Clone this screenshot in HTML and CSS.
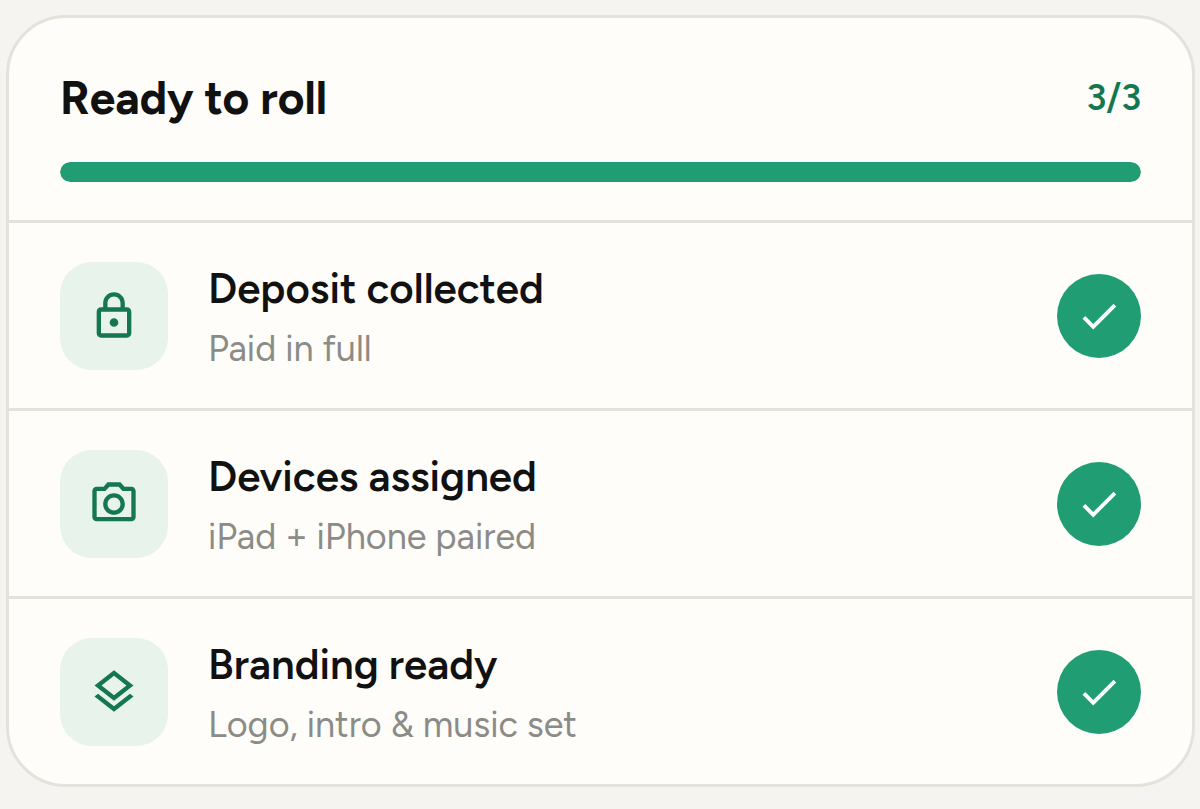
FILE: index.html
```html
<!DOCTYPE html>
<html lang="en">

<head>
  <meta charset="UTF-8" />
  <meta name="viewport" content="width=device-width, initial-scale=1.0" />
  <title>Ready to roll</title>
  <link rel="stylesheet" href="styles.css">
</head>

<body>

  <main class="card">
    <!-- Header with progress -->
    <header class="card-header">
      <div class="card-heading">
        <h1 id="card-title">Ready to roll</h1>
        <span class="count">3/3</span>
      </div>
      <div class="progress" role="progressbar" aria-labelledby="card-title" aria-valuemin="0" aria-valuemax="3" aria-valuenow="3">
        <div class="progress-fill" style="width: 100%"></div>
      </div>
    </header>

    <!-- Checklist -->
    <ul class="checklist">
      <li class="item">
        <div class="item-icon">
          <svg viewBox="0 0 24 24" aria-hidden="true">
            <path d="M18 8h-1V6c0-2.76-2.24-5-5-5S7 3.24 7 6v2H6c-1.1 0-2 .9-2 2v10c0 1.1.9 2 2 2h12c1.1 0 2-.9 2-2V10c0-1.1-.9-2-2-2zM9 6c0-1.66 1.34-3 3-3s3 1.34 3 3v2H9V6zm9 14H6V10h12v10zm-6-3c1.1 0 2-.9 2-2s-.9-2-2-2-2 .9-2 2 .9 2 2 2z" />
          </svg>
        </div>
        <div class="item-text">
          <h2>Deposit collected</h2>
          <p>Paid in full</p>
        </div>
        <div class="check">
          <svg viewBox="0 0 24 24" role="img" aria-label="Done">
            <path d="M9 16.17L4.83 12l-1.42 1.41L9 19 21 7l-1.41-1.41z" />
          </svg>
        </div>
      </li>

      <li class="item">
        <div class="item-icon">
          <svg viewBox="0 0 24 24" aria-hidden="true">
            <path d="M14.12 4l1.83 2H20v12H4V6h4.05l1.83-2h4.24M15 2H9L7.17 4H4c-1.1 0-2 .9-2 2v12c0 1.1.9 2 2 2h16c1.1 0 2-.9 2-2V6c0-1.1-.9-2-2-2h-3.17L15 2zm-3 7c1.65 0 3 1.35 3 3s-1.35 3-3 3-3-1.35-3-3 1.35-3 3-3m0-2c-2.76 0-5 2.24-5 5s2.24 5 5 5 5-2.24 5-5-2.24-5-5-5z" />
          </svg>
        </div>
        <div class="item-text">
          <h2>Devices assigned</h2>
          <p>iPad + iPhone paired</p>
        </div>
        <div class="check">
          <svg viewBox="0 0 24 24" role="img" aria-label="Done">
            <path d="M9 16.17L4.83 12l-1.42 1.41L9 19 21 7l-1.41-1.41z" />
          </svg>
        </div>
      </li>

      <li class="item">
        <div class="item-icon">
          <svg viewBox="0 0 24 24" aria-hidden="true">
            <path d="M11.99 18.54l-7.37-5.73L3 14.07l9 7 9-7-1.63-1.27-7.38 5.74zM12 16l7.36-5.73L21 9l-9-7-9 7 1.63 1.27L12 16zm0-11.47L17.74 9 12 13.47 6.26 9 12 4.53z" />
          </svg>
        </div>
        <div class="item-text">
          <h2>Branding ready</h2>
          <p>Logo, intro &amp; music set</p>
        </div>
        <div class="check">
          <svg viewBox="0 0 24 24" role="img" aria-label="Done">
            <path d="M9 16.17L4.83 12l-1.42 1.41L9 19 21 7l-1.41-1.41z" />
          </svg>
        </div>
      </li>
    </ul>
  </main>

</body>

</html>
```

FILE: styles.css
```css
/* Base Reset & Body */
* {
  margin: 0;
  padding: 0;
  box-sizing: border-box;
}

body {
  padding: 15px 5px 20px 6px;
  font-family: 'Figtree', 'Lato', sans-serif;
  background-color: #f5f4f0;
  color: #111111;
}

/* Card */
.card {
  background: #fefdf9;
  border: 3px solid #e4e2da;
  border-radius: 60px;
  overflow: hidden;
}

.card-header {
  padding: 50px 51px 38px;
}

.card-heading {
  display: flex;
  align-items: center;
  justify-content: space-between;
  margin-bottom: 34px;
}

h1 {
  font-size: 46px;
  font-weight: 700;
  line-height: 60px;
}

.count {
  font-size: 36px;
  font-weight: 600;
  line-height: 60px;
  color: #15774f;
}

.progress {
  height: 20px;
  border-radius: 10px;
  background: #e7f3eb;
  overflow: hidden;
}

.progress-fill {
  height: 100%;
  border-radius: 10px;
  background: #219d74;
}

/* Checklist rows */
.checklist {
  list-style: none;
}

.item {
  display: flex;
  align-items: center;
  gap: 40px;
  padding: 39px 51px 38px;
  border-top: 3px solid #e4e2da;
}

.item-icon {
  display: flex;
  align-items: center;
  justify-content: center;
  flex-shrink: 0;
  width: 108px;
  height: 108px;
  border-radius: 32px;
  background: #e7f3eb;
}

.item-icon svg {
  width: 52px;
  height: 52px;
  fill: #15774f;
}

.item-text {
  flex: 1;
}

h2 {
  font-size: 42px;
  font-weight: 600;
  line-height: 54px;
  margin-bottom: 12px;
}

p {
  font-size: 36px;
  line-height: 42px;
  color: #8b8b87;
}

.check {
  display: flex;
  align-items: center;
  justify-content: center;
  flex-shrink: 0;
  width: 84px;
  height: 84px;
  border-radius: 50%;
  background: #219d74;
}

.check svg {
  width: 46px;
  height: 46px;
  fill: #ffffff;
}
```
